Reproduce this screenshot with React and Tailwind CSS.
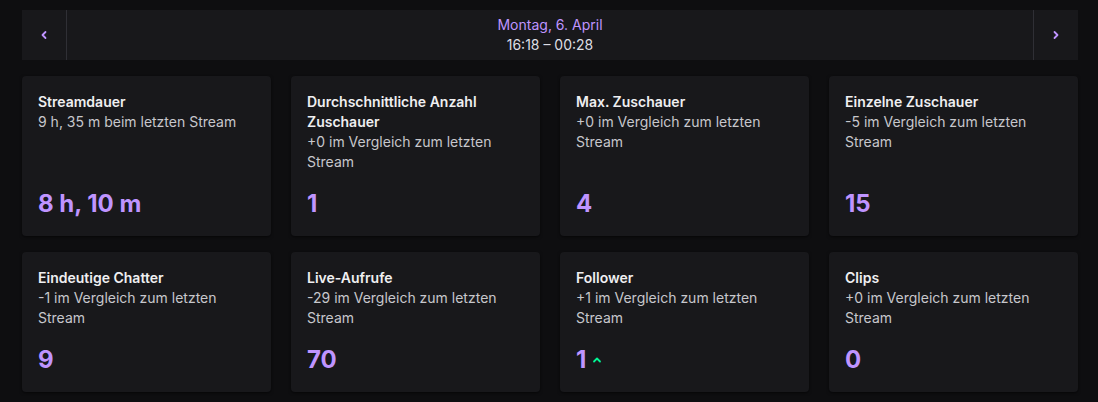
import React from 'react';

const stats = [
  { title: 'Streamdauer', sub: '9 h, 35 m beim letzten Stream', value: '8 h, 10 m' },
  { title: 'Durchschnittliche Anzahl Zuschauer', sub: '+0 im Vergleich zum letzten Stream', value: '1' },
  { title: 'Max. Zuschauer', sub: '+0 im Vergleich zum letzten Stream', value: '4' },
  { title: 'Einzelne Zuschauer', sub: '-5 im Vergleich zum letzten Stream', value: '15' },
  { title: 'Eindeutige Chatter', sub: '-1 im Vergleich zum letzten Stream', value: '9' },
  { title: 'Live-Aufrufe', sub: '-29 im Vergleich zum letzten Stream', value: '70' },
  { title: 'Follower', sub: '+1 im Vergleich zum letzten Stream', value: '1', up: true },
  { title: 'Clips', sub: '+0 im Vergleich zum letzten Stream', value: '0' },
];

const Chevron = ({ dir }) => (
  <svg width="8" height="10" viewBox="0 0 8 10" fill="none">
    <path
      d={dir === 'left' ? 'M5.5 2 L2.5 5 L5.5 8' : 'M2.5 2 L5.5 5 L2.5 8'}
      stroke="#bf94ff"
      strokeWidth="1.8"
      strokeLinecap="round"
      strokeLinejoin="round"
    />
  </svg>
);

const StatCard = ({ stat }) => (
  <div className="flex flex-col rounded bg-[#18181b] p-4 shadow-[0_1px_3px_rgba(0,0,0,0.6)]">
    <div className="text-[14px] font-semibold leading-5 text-[#efeff1]">{stat.title}</div>
    <div className="text-[14px] leading-5 text-[#c7c7cc]">{stat.sub}</div>
    <div className="mt-auto flex items-center gap-1.5 pt-4 text-[24px] font-bold leading-8 text-[#bf94ff]">
      {stat.value}
      {stat.up && (
        <svg width="10" height="8" viewBox="0 0 10 8" fill="none">
          <path d="M2 5.5 L5 2.5 L8 5.5" stroke="#00f593" strokeWidth="1.8" strokeLinecap="round" strokeLinejoin="round" />
        </svg>
      )}
    </div>
  </div>
);

export default function App() {
  return (
    <div className="min-h-[402px] bg-[#0e0e10] pt-[10px] pl-[22px]" style={{ fontFamily: 'Inter, "Noto Sans", sans-serif' }}>
      <div className="w-[1056px]">
        {/* Date navigation */}
        <div className="flex h-[50px] bg-[#18181b]">
          <button className="flex w-[45px] items-center justify-center border-r border-[#2f2f35]">
            <Chevron dir="left" />
          </button>
          <div className="flex flex-1 flex-col items-center justify-center text-[14px] leading-5">
            <span className="text-[#bf94ff]">Montag, 6. April</span>
            <span className="text-[#dedee3]">16:18 – 00:28</span>
          </div>
          <button className="flex w-[45px] items-center justify-center border-l border-[#2f2f35]">
            <Chevron dir="right" />
          </button>
        </div>

        {/* Stats */}
        <div className="mt-4 grid grid-cols-4 gap-x-5 gap-y-4">
          {stats.map((s) => (
            <StatCard key={s.title} stat={s} />
          ))}
        </div>
      </div>
    </div>
  );
}
